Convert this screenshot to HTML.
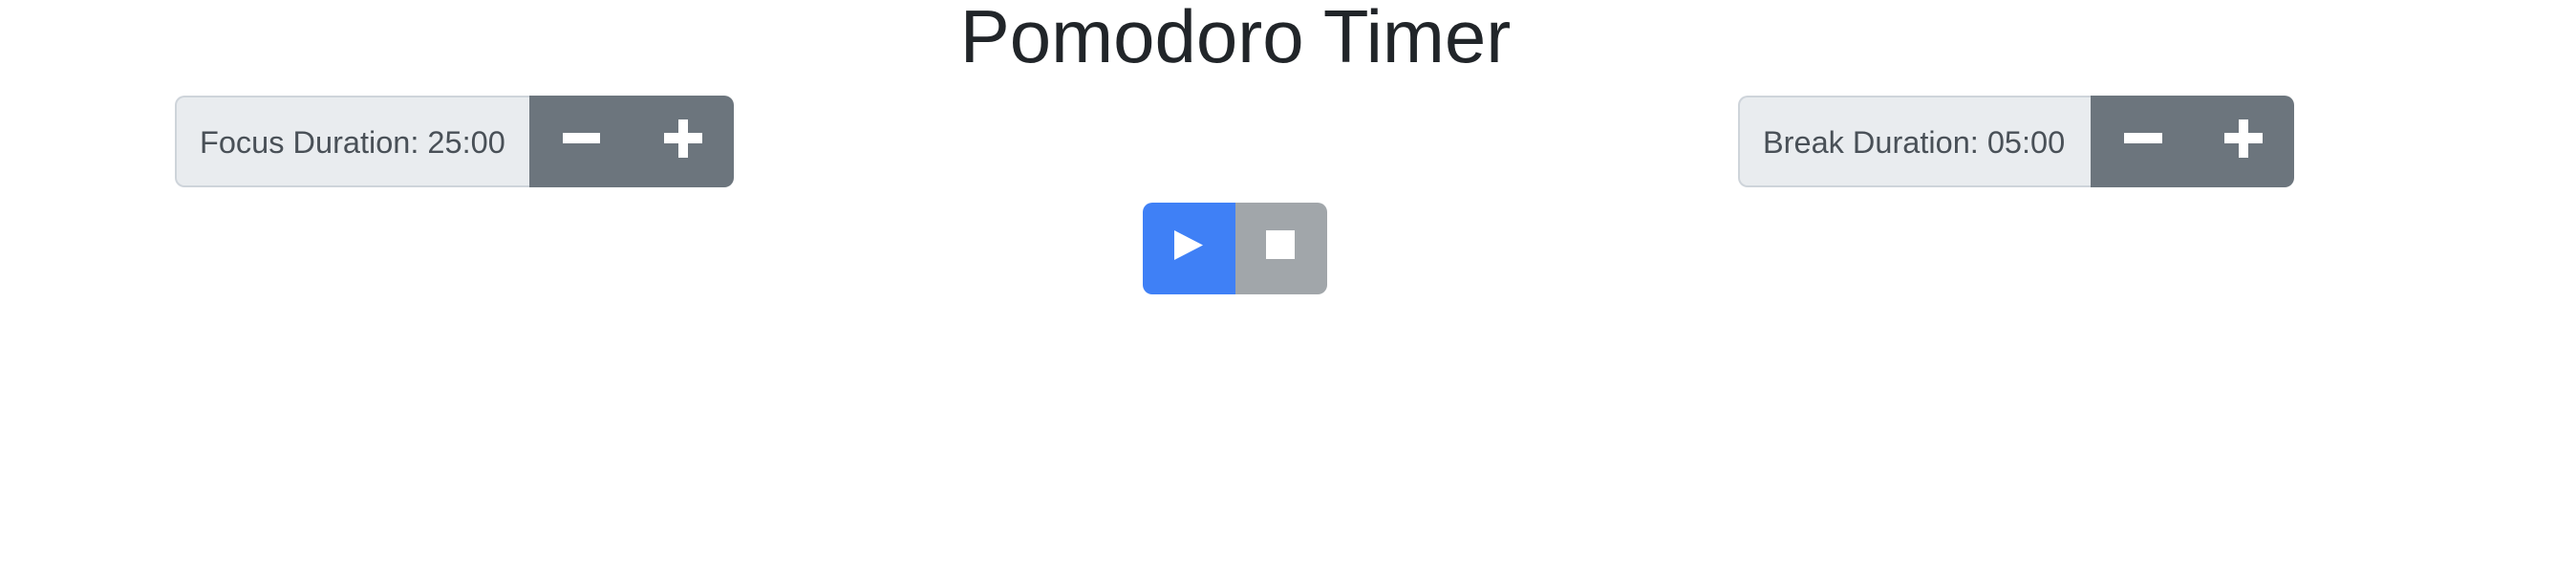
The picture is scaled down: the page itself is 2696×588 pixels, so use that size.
<!DOCTYPE html>
<html><head><style>
body{margin:0;background:#fff;width:2696px;height:588px;overflow:hidden;position:relative;font-family:"Liberation Sans",Arial,sans-serif}
h1{position:absolute;margin:0;left:0;width:2586px;text-align:center;top:-7px;font-size:78px;font-weight:400;color:#212529;line-height:90px}
.grp{position:absolute;top:100px;height:96px;display:flex}
.lbl{background:#e9ecef;border:2px solid #ced4da;border-right:none;border-radius:10px 0 0 10px;box-sizing:border-box;height:96px;display:flex;align-items:center;color:#495057;font-size:32.5px;padding-left:24px;padding-top:3px}
.btns{background:#6c757d;border-radius:0 10px 10px 0;position:relative;height:96px}
.bar{position:absolute;background:#fff}
</style></head><body>
<h1>Pomodoro Timer</h1>
<div class="grp" style="left:183px">
 <div class="lbl" style="width:371px">Focus Duration: 25:00</div>
 <div class="btns" style="width:214px">
  <div class="bar" style="left:35px;top:39px;width:39px;height:11px"></div>
  <div class="bar" style="left:141px;top:39px;width:40px;height:11px"></div>
  <div class="bar" style="left:156px;top:25px;width:10px;height:40px"></div>
 </div>
</div>
<div class="grp" style="left:1819px">
 <div class="lbl" style="width:369px">Break Duration: 05:00</div>
 <div class="btns" style="width:213px">
  <div class="bar" style="left:35px;top:39px;width:40px;height:11px"></div>
  <div class="bar" style="left:140px;top:39px;width:40px;height:11px"></div>
  <div class="bar" style="left:155px;top:25px;width:10px;height:40px"></div>
 </div>
</div>
<div style="position:absolute;left:1196px;top:212px;width:97px;height:96px;background:#3f80f6;border-radius:10px 0 0 10px"></div>
<div style="position:absolute;left:1293px;top:212px;width:96px;height:96px;background:#a1a6aa;border-radius:0 10px 10px 0"></div>
<svg style="position:absolute;left:1229px;top:241px" width="30" height="31"><polygon points="0,0 30,15.5 0,31" fill="#fff"/></svg>
<div style="position:absolute;left:1325px;top:241px;width:30px;height:30px;background:#fff"></div>
</body></html>
